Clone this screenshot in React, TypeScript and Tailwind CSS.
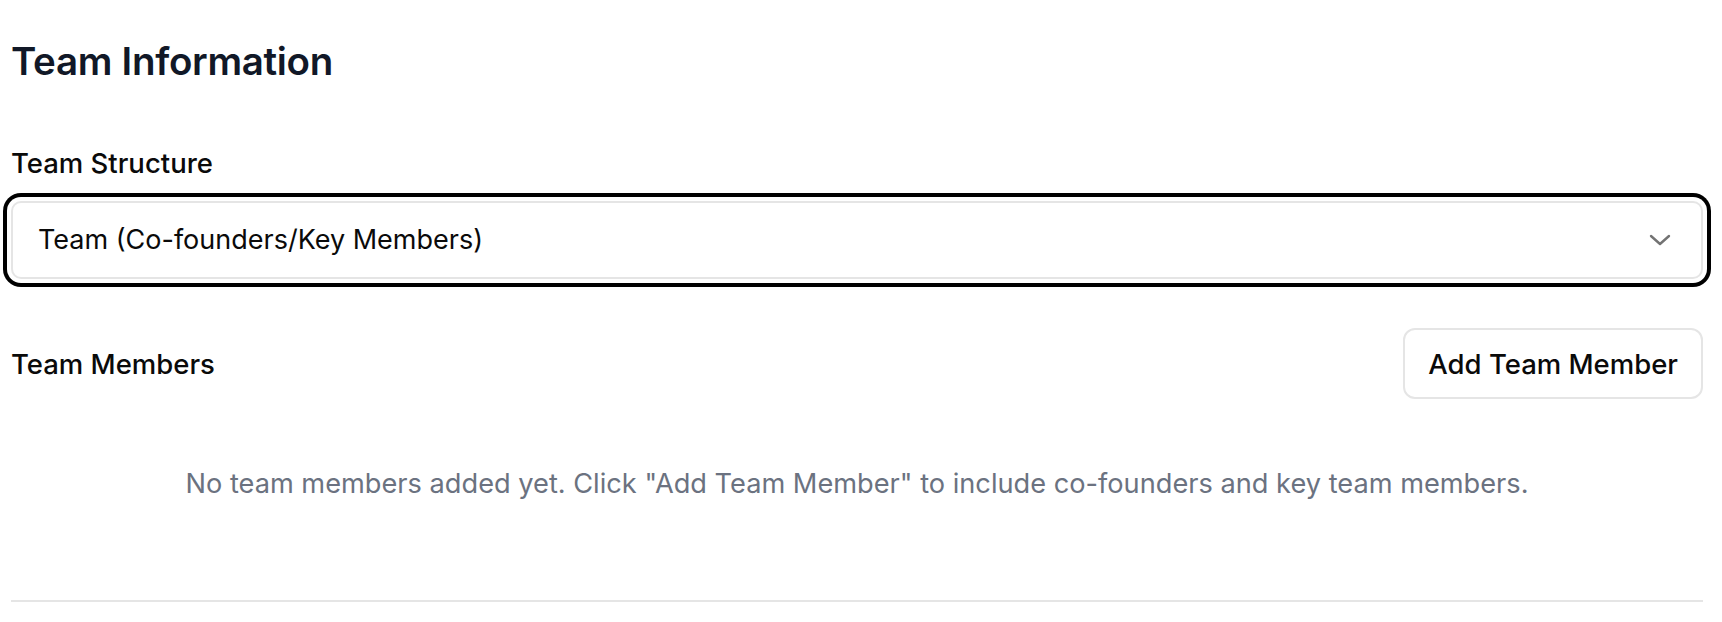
export default function App() {
  return (
    <div
      className="bg-white w-[1722px] h-[622px] pl-[11px] pr-[19px] pt-[37px] text-[#0a0a0a]"
      style={{ fontFamily: "Inter, 'Noto Sans', sans-serif" }}
    >
      {/* Section title */}
      <h2 className="text-[38.5px] leading-[48px] font-semibold text-[#111827] tracking-[-0.3px]">
        Team Information
      </h2>

      {/* Team structure select */}
      <div className="mt-[60px]">
        <label className="block text-[27.5px] leading-[36px] font-medium">
          Team Structure
        </label>
        <div className="mt-[20px] h-[78px] rounded-[10px] border-2 border-[#e5e5e5] bg-white ring-4 ring-black ring-offset-4 ring-offset-white flex items-center justify-between pl-[25px] pr-[30px]">
          <span className="text-[27px] leading-[36px]">
            Team (Co-founders/Key Members)
          </span>
          <svg width="22" height="12" viewBox="0 0 22 12" fill="none">
            <path
              d="M2 2 L11 10 L20 2"
              stroke="#737373"
              strokeWidth="2.4"
              strokeLinecap="round"
              strokeLinejoin="round"
            />
          </svg>
        </div>
      </div>

      {/* Team members */}
      <div className="mt-[49px] flex items-center justify-between">
        <span className="text-[27.5px] leading-[36px] font-medium">Team Members</span>
        <button className="h-[71px] px-[23px] rounded-[12px] border-2 border-[#e5e5e5] bg-white text-[27.5px] leading-[36px] font-medium">
          Add Team Member
        </button>
      </div>

      <p className="mt-[67px] text-center text-[27.2px] leading-[36px] text-[#6b7280]">
        No team members added yet. Click "Add Team Member" to include co-founders and key team members.
      </p>

      <div className="mt-[98px] h-[2px] bg-[#e5e5e5]" />
    </div>
  );
}
